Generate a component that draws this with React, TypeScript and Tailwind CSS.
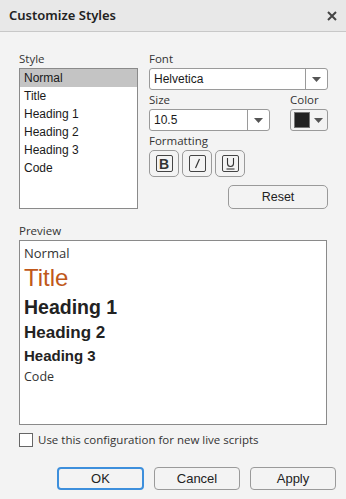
import React from "react";

const ui = { fontFamily: '"Open Sans", "Noto Sans", sans-serif' };
const arial = { fontFamily: '"Liberation Sans", Arial, sans-serif' };

function Arrow() {
  return (
    <svg width="9" height="5" viewBox="0 0 9 5">
      <path d="M0 0 L9 0 L4.5 5 Z" fill="#555" />
    </svg>
  );
}

function Label({ children, h = "h-[16px]" }: { children: React.ReactNode; h?: string }) {
  return (
    <div className={`${h} text-[11.5px] text-[#333] leading-[16px] flex items-end pb-[1px]`} style={ui}>
      {children}
    </div>
  );
}

function Dropdown({ value, width }: { value: string; width: string }) {
  return (
    <div className={`${width} h-[22px] flex border border-[#9a9a9a] rounded-[3px] bg-white`}>
      <div className="flex-1 flex items-center pl-[4px] text-[12px] text-[#1a1a1a]" style={arial}>
        {value}
      </div>
      <div className="w-[22px] border-l border-[#9a9a9a] flex items-center justify-center">
        <Arrow />
      </div>
    </div>
  );
}

export default function App() {
  const items = ["Normal", "Title", "Heading 1", "Heading 2", "Heading 3", "Code"];
  return (
    <div className="w-[346px] h-[499px] bg-[#f3f3f3] flex flex-col overflow-hidden">
      <div className="h-[32px] bg-[#e8e8e8] border-b border-[#c8c8c8] flex items-center justify-between pl-[9px] pr-[9px]">
        <span className="text-[13px] font-semibold text-[#222]" style={{ fontFamily: '"Noto Sans", "Open Sans", sans-serif' }}>
          Customize Styles
        </span>
        <svg width="10" height="10" viewBox="0 0 10 10">
          <path d="M1 1 L9 9 M9 1 L1 9" stroke="#444" strokeWidth="2" />
        </svg>
      </div>
      <div className="flex flex-col pl-[19px] pt-[20px]">
        <div className="flex gap-[11px]">
          <div className="w-[119px] flex flex-col">
            <Label>Style</Label>
            <div className="h-[141px] border border-[#8a8a8a] bg-white flex flex-col">
              {items.map((it, i) => (
                <div
                  key={it}
                  className={`h-[18px] flex items-center pl-[4px] text-[12px] text-[#1a1a1a] ${i === 0 ? "bg-[#c4c4c4]" : ""}`}
                  style={arial}
                >
                  {it}
                </div>
              ))}
            </div>
          </div>
          <div className="w-[179px] flex flex-col">
            <Label>Font</Label>
            <Dropdown value="Helvetica" width="w-[179px]" />
            <div className="flex">
              <div className="flex flex-col">
                <Label h="h-[19px]">Size</Label>
                <Dropdown value="10.5" width="w-[121px]" />
              </div>
              <div className="ml-auto flex flex-col">
                <Label h="h-[19px]">Color</Label>
                <div className="w-[38px] h-[22px] border border-[#9a9a9a] rounded-[3px] bg-[#f3f3f3] flex items-center pl-[3px] gap-[4px]">
                  <div className="w-[16px] h-[16px] bg-[#222] border border-[#777]" />
                  <Arrow />
                </div>
              </div>
            </div>
            <Label h="h-[19px]">Formatting</Label>
            <div className="flex gap-[3px]">
              {["B", "I", "U"].map((l) => (
                <div key={l} className="w-[30px] h-[27px] border border-[#9a9a9a] rounded-[5px] flex items-center justify-center">
                  <div className="w-[17px] h-[17px] border border-[#444] rounded-[2px] flex items-center justify-center">
                    {l === "B" && (
                      <span className="text-[14px] font-bold text-[#333] leading-none" style={arial}>B</span>
                    )}
                    {l === "I" && (
                      <svg width="9" height="11" viewBox="0 0 9 11">
                        <path d="M6.5 1 L2.5 10" stroke="#333" strokeWidth="1.2" />
                      </svg>
                    )}
                    {l === "U" && (
                      <svg width="11" height="13" viewBox="0 0 11 13">
                        <path d="M2.5 1 V6.5 Q2.5 9.5 5.5 9.5 Q8.5 9.5 8.5 6.5 V1" stroke="#333" strokeWidth="1.1" fill="none" />
                        <path d="M1.5 12 H9.5" stroke="#333" strokeWidth="1.1" />
                      </svg>
                    )}
                  </div>
                </div>
              ))}
            </div>
            <div className="flex justify-end mt-[8px]">
              <div className="w-[100px] h-[24px] border border-[#9a9a9a] rounded-[5px] flex items-center justify-center text-[12.5px] text-[#222]" style={arial}>
                Reset
              </div>
            </div>
          </div>
        </div>
        <div className="mt-[11px]">
          <Label h="h-[20px]">Preview</Label>
        </div>
        <div className="w-[308px] h-[185px] border border-[#8a8a8a] bg-white flex flex-col pl-[4px] pt-[2px]">
          <div className="text-[13px] leading-[20px] text-[#333]" style={ui}>Normal</div>
          <div className="text-[24px] leading-[28px] text-[#c0581a] mt-[1px]" style={arial}>Title</div>
          <div className="text-[19.5px] leading-[28px] font-bold text-[#222] mt-[1px]" style={arial}>Heading 1</div>
          <div className="text-[17px] leading-[23px] font-bold text-[#222]" style={arial}>Heading 2</div>
          <div className="text-[15px] leading-[23px] font-bold text-[#222]" style={arial}>Heading 3</div>
          <div className="text-[12.5px] leading-[20px] text-[#333]" style={ui}>Code</div>
        </div>
        <div className="flex items-center mt-[8px] h-[14px] gap-[5px]">
          <div className="w-[14px] h-[14px] border border-[#666] bg-white" />
          <span className="text-[11.5px] text-[#333]" style={ui}>Use this configuration for new live scripts</span>
        </div>
      </div>
      <div className="flex justify-end gap-[10px] pr-[10px] mt-[20px]">
        <div className="w-[87px] h-[23px] border-2 border-[#3d8fdc] rounded-[4px] flex items-center justify-center text-[13px] text-[#222]" style={arial}>OK</div>
        <div className="w-[86px] h-[23px] border border-[#9a9a9a] rounded-[4px] flex items-center justify-center text-[13px] text-[#222]" style={arial}>Cancel</div>
        <div className="w-[86px] h-[23px] border border-[#9a9a9a] rounded-[4px] flex items-center justify-center text-[13px] text-[#222]" style={arial}>Apply</div>
      </div>
    </div>
  );
}
